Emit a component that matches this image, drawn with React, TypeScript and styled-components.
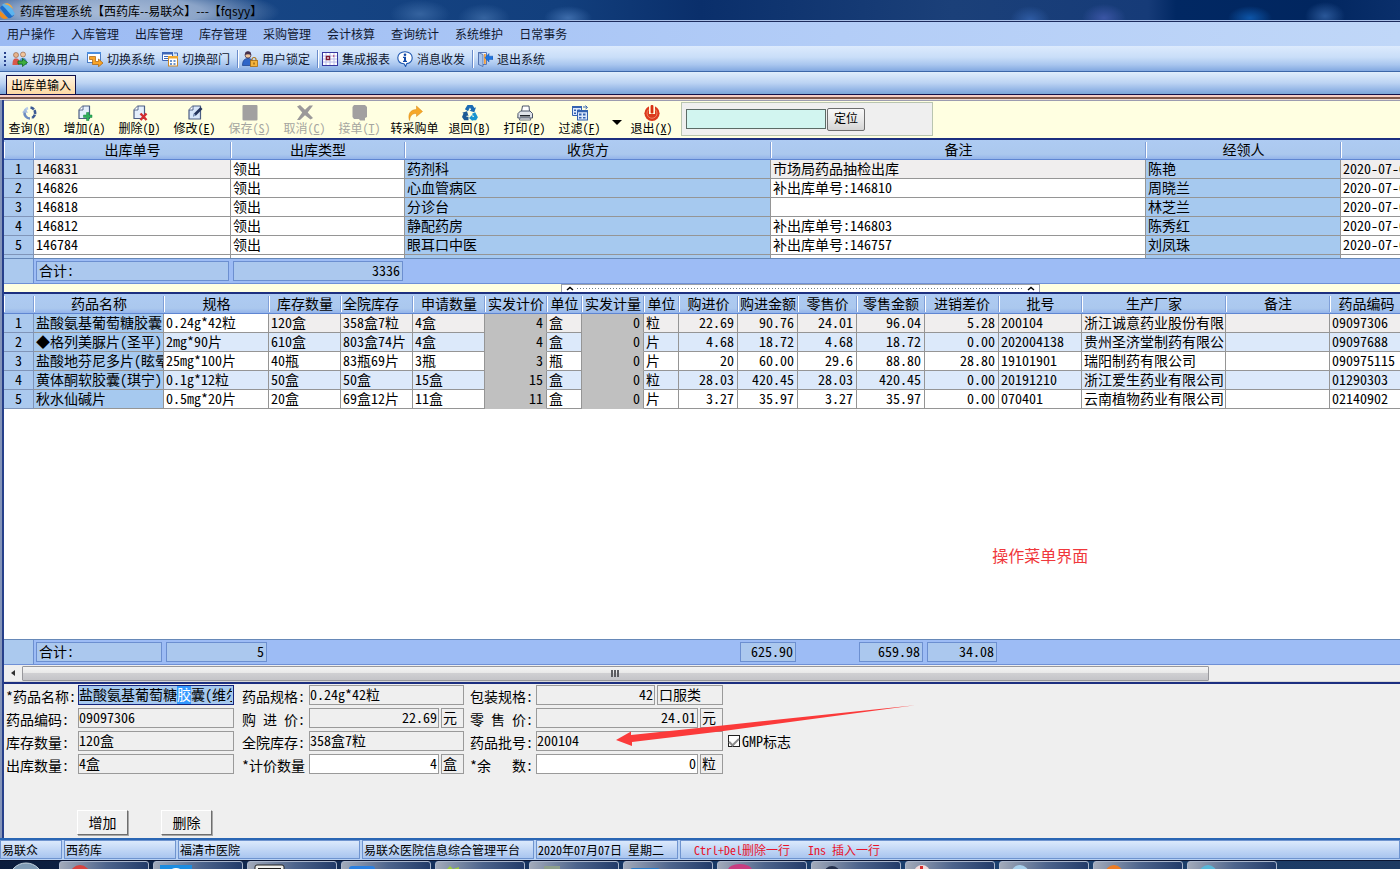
import React, { useEffect, useRef } from "react";
import styled, { createGlobalStyle, css } from "styled-components";

const GlobalStyle = createGlobalStyle`
  * { box-sizing: border-box; }
  body {
    margin: 0;
    background: #efefef;
    color: #000;
    font-family: "Noto Sans CJK SC", sans-serif;
    font-size: 14px;
  }
  button, input { font-family: inherit; }
`;

const halfWidth = css`
  font-feature-settings: "hwid" 1;
`;

const Window = styled.div`
  display: flex;
  flex-direction: column;
  min-height: 100vh;
  overflow: hidden;
`;

/* ---------- title, menu, system toolbar ---------- */

const TitleBar = styled.header`
  display: flex;
  align-items: center;
  gap: 4px;
  height: 22px;
  font-size: 12px;
  line-height: 18px;
  border-bottom: 1px solid #1c2b5c;
  box-shadow: inset 0 -1px 0 #a9bfe6;
  background:
    radial-gradient(ellipse 170px 28px at 110px 12px, #a9bcd8 0%, #8ba4c8 55%, rgba(90, 125, 175, 0) 100%),
    radial-gradient(ellipse 30px 14px at 420px 14px, #35639f, rgba(60, 100, 160, 0)),
    radial-gradient(ellipse 26px 14px at 484px 18px, #35639f, rgba(60, 100, 160, 0)),
    radial-gradient(ellipse 24px 12px at 568px 18px, #3d6cab, rgba(60, 100, 160, 0)),
    radial-gradient(ellipse 20px 14px at 1030px 20px, #2f5ca4, rgba(60, 100, 160, 0)),
    radial-gradient(ellipse 22px 14px at 1104px 18px, #3a55a4, rgba(60, 80, 160, 0)),
    radial-gradient(ellipse 22px 12px at 1250px 18px, #0d55a8, rgba(20, 80, 160, 0)),
    radial-gradient(ellipse 20px 14px at 1325px 16px, #2a5798, rgba(60, 100, 160, 0)),
    linear-gradient(90deg, #1a4a8a 0%, #123f7d 40%, #0a2f6b 50%, #1b4079 68%, #163b78 82%, #012863 84%, #01265f 94%, #0a2f6b 100%);
`;

const MenuBar = styled.nav`
  display: flex;
  align-items: center;
  gap: 16px;
  height: 24px;
  padding-left: 7px;
  background: linear-gradient(90deg, #9bbaf3, #b3cdf7 60%, #c0d7f8);
`;

const MenuItem = styled.button`
  border: 0;
  padding: 0;
  background: none;
  font-size: 12px;
  line-height: 18px;
  color: #101830;
  white-space: nowrap;
`;

const SystemBar = styled.div`
  display: flex;
  align-items: center;
  height: 26px;
  padding-left: 4px;
  border-bottom: 1px solid #3c67a8;
  background: linear-gradient(#dceafd, #c9def8 45%, #a9c6ef 75%, #82a8e0);
`;

const Grip = styled.span`
  width: 2px;
  height: 14px;
  margin-right: 6px;
  background: repeating-linear-gradient(#27408b 0 2px, transparent 2px 4px);
`;

const SystemButton = styled.button`
  display: flex;
  align-items: center;
  gap: 4px;
  margin-right: 7px;
  border: 0;
  padding: 0;
  background: none;
  font-size: 12px;
  line-height: 18px;
  color: #101830;
  white-space: nowrap;
`;

const BarSeparator = styled.span`
  width: 1px;
  height: 18px;
  margin-right: 4px;
  background: #6a8ccb;
  box-shadow: 1px 0 0 #fff;
`;

/* ---------- tab strip and command bar ---------- */

const TabStrip = styled.div`
  display: flex;
  align-items: flex-end;
  height: 23px;
  padding-left: 6px;
  border-bottom: 1px solid #10104a;
  background: linear-gradient(#e0eefc, #bcd3f3 50%, #8fb2e4 85%, #7ba7d6);
`;

const Tab = styled.button`
  height: 19px;
  border: 1px solid #10104a;
  border-bottom: 0;
  padding: 0 4px;
  background: linear-gradient(#fff3df, #fdd9a4);
  font-size: 12px;
  line-height: 18px;
  color: #000;
`;

const TabRule = styled.div`
  height: 5px;
  background: linear-gradient(#f6cfc6 0 2px, #80584c 2px 4px, #e8dcd8 4px 5px);
`;

const Workspace = styled.main`
  display: flex;
  flex: 1;
  flex-direction: column;
  border-left: 2px solid #8494b8;
  box-shadow: inset 2px 0 0 #27408b;
  padding-left: 2px;
`;

const CommandBar = styled.div`
  display: flex;
  height: 38px;
  border-top: 1px solid #9c9cb0;
  background: #ffffe1;
`;

const CommandButton = styled.button`
  display: flex;
  flex: none;
  flex-direction: column;
  align-items: center;
  width: 55px;
  border: 0;
  padding: 4px 0 0;
  background: none;
  font-size: 12px;
  line-height: 14px;
  white-space: nowrap;
  color: #000;
  ${halfWidth}

  &:first-child { margin-left: -2px; }
  &:disabled { color: #a5a5a0; }
`;

const DropButton = styled.button`
  flex: none;
  width: 17px;
  border: 0;
  padding: 0 0 0 3px;
  background: none;
`;

const SearchPanel = styled.form`
  display: flex;
  align-items: center;
  gap: 1px;
  width: 252px;
  height: 34px;
  margin: 1px 0 0 2px;
  border: 1px solid #b9c5b0;
  padding-left: 4px;
  background: #efefef;
`;

const SearchInput = styled.input`
  width: 140px;
  height: 20px;
  border: 1px solid #5c6b66;
  padding: 0 2px;
  background: #d2f5f0;
`;

const SearchButton = styled.button`
  width: 38px;
  height: 23px;
  border: 1px solid #6e6e6e;
  border-radius: 2px;
  padding: 0 0 2px;
  background: linear-gradient(#f8f8f8, #e9e9e9 50%, #d4d4d4);
  font-size: 12px;
  line-height: 18px;
`;

/* ---------- data grids ---------- */

const GridFrame = styled.section<{ $grow?: boolean }>`
  position: relative;
  display: flex;
  flex-direction: column;
  flex: ${(p) => (p.$grow ? "1" : "none")};
  border-top: 2px solid #1c2f80;
  background: #fff;
  overflow: hidden;
`;

const GridViewport = styled.div<{ $clip?: boolean }>`
  overflow: hidden;
  ${(p) => p.$clip && "height: 118px;"}
`;

const Table = styled.table<{ $min: number }>`
  width: 100%;
  min-width: ${(p) => p.$min}px;
  table-layout: fixed;
  border-collapse: separate;
  border-spacing: 0;
  line-height: 16px;
  ${halfWidth}
`;

const HeadCell = styled.th<{ $left?: boolean }>`
  height: 20px;
  padding: 0 0 0 ${(p) => (p.$left ? "2px" : "0")};
  vertical-align: top;
  line-height: 18px;
  border-bottom: 1px solid #5f86d2;
  text-align: ${(p) => (p.$left ? "left" : "center")};
  font-weight: normal;
  white-space: nowrap;
  background:
    linear-gradient(#fff, #fff) left 2px / 1px 16px no-repeat,
    linear-gradient(#7f9fd8, #7f9fd8) right 2px / 1px 16px no-repeat,
    linear-gradient(#aecbf2, #abc8ee 75%, #94b4ea);
`;

type Tone = "plain" | "soft" | "band" | "blue" | "grey";

const toneColor: Record<Tone, string> = {
  plain: "#ffffff",
  soft: "#f0eeee",
  band: "#dce9fa",
  blue: "#a6c9ef",
  grey: "#c0c0c0",
};

const Cell = styled.td<{ $tone: Tone; $right?: boolean; $clip?: boolean }>`
  height: 19px;
  padding: 0 ${(p) => (p.$clip ? "0" : "3px")} 0 2px;
  vertical-align: top;
  border-right: 1px solid #959595;
  border-bottom: 1px solid ${(p) => (p.$tone === "grey" ? "#c0c0c0" : "#959595")};
  text-align: ${(p) => (p.$right ? "right" : "left")};
  white-space: nowrap;
  ${(p) => p.$clip && "overflow: hidden;"}
  background: ${(p) => toneColor[p.$tone]};
`;

const RowNumber = styled.th`
  height: 19px;
  padding: 0;
  vertical-align: top;
  border-right: 1px solid #7f94b8;
  border-bottom: 1px solid #7f94b8;
  font-weight: normal;
  text-align: center;
  background: #abc9ee;
`;

const SummaryRow = styled.div`
  display: flex;
  flex: none;
  height: 26px;
  border-top: 1px solid #6688b8;
  border-bottom: 1px solid #6f90d6;
  background: #9dbcf5;
  line-height: 18px;
  ${halfWidth}
`;

const SummaryCell = styled.div<{ $width: number; $kind?: "corner" | "box"; $right?: boolean }>`
  flex: none;
  width: ${(p) => p.$width}px;
  ${(p) => p.$kind === "corner" && "border-right: 1px solid #6c8fd0; background: #abc9ee;"}
  ${(p) => p.$kind === "box" && "padding: 2px;"}
  text-align: ${(p) => (p.$right ? "right" : "left")};

  > output {
    display: block;
    height: 20px;
    border: 1px solid #6c8fd0;
    padding: 0 2px;
    line-height: 16px;
    background: #abc8ee;
  }
`;

const Splitter = styled.div`
  display: flex;
  height: 8px;
  background: #ffffe1;
`;

const SplitterHandle = styled.div`
  display: flex;
  align-items: center;
  gap: 3px;
  width: 34.3%;
  margin-left: 557px;
  border: 1px solid #9aa0a8;
  border-bottom: 0;
  padding: 0 4px;
  background: #fff;

  > i {
    flex: 1;
    height: 1px;
    background: repeating-linear-gradient(90deg, #6f7f8a 0 1px, transparent 1px 3px);
  }
`;

const BlankArea = styled.div`
  position: relative;
  flex: 1;
  min-height: 160px;
`;

const Note = styled.p`
  position: absolute;
  left: 70.8%;
  top: 134px;
  margin: 0;
  font-size: 16px;
  line-height: 24px;
  color: #f0383c;
  white-space: nowrap;
`;

const ScrollTrack = styled.div`
  display: flex;
  flex: none;
  align-items: center;
  height: 17px;
  border-bottom: 1px solid #d8d8d8;
  background: #efefef;
`;

const ScrollArrow = styled.button`
  display: flex;
  align-items: center;
  justify-content: center;
  width: 18px;
  height: 16px;
  border: 0;
  padding: 0;
  background: none;
`;

const ScrollThumb = styled.div`
  display: flex;
  align-items: center;
  justify-content: center;
  width: 85%;
  height: 15px;
  border: 1px solid #98989c;
  border-radius: 1px;
  background: linear-gradient(#f4f4f4, #e8e8e8 45%, #cfcfd2 50%, #c4c4c8);

  > i {
    width: 8px;
    height: 7px;
    background: repeating-linear-gradient(90deg, #5c5c60 0 2px, transparent 2px 3px);
  }
`;

/* ---------- detail form ---------- */

const DetailForm = styled.form`
  position: relative;
  flex: none;
  border-top: 2px solid #1c2f80;
  padding: 1px 0 3px 2px;
  background: #efefef;
  ${halfWidth}
`;

const FieldGrid = styled.div`
  display: grid;
  grid-template-columns: 72px 156px 75px 155px 72px 187px auto;
  grid-auto-rows: 20px;
  row-gap: 3px;
  justify-content: start;
`;

const Label = styled.label<{ $indent?: number }>`
  padding: 2px 0 0 ${(p) => p.$indent ?? 0}px;
  line-height: 18px;
  white-space: pre;
`;

const FieldBox = styled.div`
  display: flex;
  gap: 2px;
`;

const TextField = styled.input<{ $right?: boolean; $open?: boolean; $active?: boolean }>`
  flex: 1;
  width: 0;
  min-width: 0;
  height: 20px;
  border: 1px solid ${(p) => (p.$active ? "#14247c" : "#9a9a9a")};
  outline: 0;
  padding: 0 1px 2px 0;
  background: ${(p) => (p.$active ? "#a6c9ef" : p.$open ? "#fff" : "#efefef")};
  color: #000;
  font-size: 14px;
  line-height: 18px;
  text-align: ${(p) => (p.$right ? "right" : "left")};
  ${halfWidth}

  &::selection { background: #3399ff; color: #fff; }
`;

const Unit = styled.output<{ $wide?: boolean }>`
  flex: none;
  width: ${(p) => (p.$wide ? "66px" : "23px")};
  height: 20px;
  border: 1px solid #9a9a9a;
  padding-left: 1px;
  line-height: 16px;
`;

const CheckLabel = styled.label`
  display: flex;
  align-items: center;
  gap: 2px;
  padding-left: 5px;
  line-height: 18px;
  white-space: nowrap;
`;

const CheckBox = styled.input`
  display: grid;
  place-items: center;
  appearance: none;
  width: 12px;
  height: 12px;
  margin: 0;
  border: 1px solid #202020;
  background: #fff;

  &:checked::after {
    content: "";
    width: 4px;
    height: 8px;
    margin-bottom: 2px;
    border: solid #8a8a8a;
    border-width: 0 2px 2px 0;
    transform: rotate(45deg);
  }
`;

const FormActions = styled.div`
  display: flex;
  gap: 33px;
  padding: 36px 0 0 71px;
`;

const ActionButton = styled.button`
  width: 51px;
  height: 25px;
  border: 1px solid;
  border-color: #fff #6e6e6e #6e6e6e #fff;
  box-shadow: 1px 1px 0 #a8a8a8;
  padding: 0 0 2px;
  background: #f0f0f0;
  font-size: 14px;
  line-height: 20px;
`;

const Arrow = styled.svg`
  position: absolute;
  left: 612px;
  top: 20px;
  pointer-events: none;
`;

/* ---------- status bar and task bar ---------- */

const StatusBar = styled.footer`
  display: flex;
  flex: none;
  gap: 2px;
  height: 22px;
  border-top: 2px solid #2a66b4;
  padding-bottom: 1px;
  background: #b9d2f4;
  font-size: 12px;
  line-height: 17px;
  ${halfWidth}
`;

const StatusPanel = styled.div<{ $width?: number; $alert?: boolean }>`
  flex: ${(p) => (p.$width ? `0 0 ${p.$width}px` : "1")};
  border: 1px solid #6f94cf;
  padding-left: ${(p) => (p.$alert ? "13px" : "1px")};
  color: ${(p) => (p.$alert ? "#e8142c" : "#000")};
  background: linear-gradient(#dbe9fc, #a9c5ef);
  white-space: pre;
`;

const TaskBar = styled.div`
  display: flex;
  flex: none;
  gap: 4px;
  height: 9px;
  padding-left: 59px;
  overflow: hidden;
  position: relative;
  border-top: 1px solid #0a1430;
  background: linear-gradient(90deg, #0b1c3c, #15305c 30%, #1b4170 70%, #1d3a62);
`;

const TaskButton = styled.button`
  display: flex;
  flex: none;
  align-items: flex-start;
  width: 90px;
  height: 40px;
  border: 1px solid #aab6cc;
  border-radius: 3px;
  padding: 2px 0 0 6px;
  background: linear-gradient(100deg, #a3abba, #4d648c 50%, #1c3564);
`;

const StartOrb = styled.svg`
  position: absolute;
  left: 8px;
  top: 1px;
`;

/* ---------- icons ---------- */

const Ico = ({ children }: { children: React.ReactNode }) => (
  <svg width="16" height="16" viewBox="0 0 16 16" aria-hidden="true">{children}</svg>
);

const icons = {
  users: (
    <Ico>
      <circle cx="4" cy="4" r="2.5" fill="#e8b48c" stroke="#8c5a3a" strokeWidth=".6" />
      <path d="M0.5 14c0-5 1-6.500 3.500-6.500S8 9 8 14z" fill="#d8574a" />
      <circle cx="11" cy="3.500" r="2.500" fill="#f0c49c" stroke="#8c5a3a" strokeWidth=".6" />
      <path d="M7 14c0-5.500 1-7 4-7s4 1.500 4 7z" fill="#5c9ad8" />
      <path d="M6 10h4.500V7.500L15.500 11.500 10.500 15.500V13H6z" fill="#3fae3f" stroke="#14641c" strokeWidth=".8" />
    </Ico>
  ),
  system: (
    <Ico>
      <rect x=".5" y="1.500" width="13" height="10" fill="#fff" stroke="#4b7cc4" />
      <path d="M0 1h14v2H0z" fill="#4b8ee0" />
      <path d="M2.500 5.500h6v5h3V8l4.500 4-4.500 3.800V13.500H5.500V8.500H2.500z" fill="#f8a428" stroke="#a8600c" strokeWidth=".7" />
    </Ico>
  ),
  dept: (
    <Ico>
      <path d="M.5 1.500h10v8H.500z" fill="#fff" stroke="#3c66b8" />
      <path d="M0 1h11v2.500H0zM2 5h4v1H2zM2 7h4v1H2z" fill="#3c66b8" />
      <path d="M12 2h3.500v3" fill="none" stroke="#3c66b8" />
      <rect x="6.500" y="5.500" width="9" height="9.500" fill="#fff" stroke="#c8882c" />
      <path d="M6 5h10v2.500H6z" fill="#f0a830" />
      <path d="M8 9h2v2H8zM11.500 9h2v2h-2zM8 12h2v2H8zM11.500 12h2v2h-2z" fill="#6c94cc" />
    </Ico>
  ),
  lock: (
    <Ico>
      <path d="M0.500 14.500c0-5 2-7 5.500-7s5.500 2 5.500 7z" fill="#2f66c8" stroke="#183c88" strokeWidth=".7" />
      <circle cx="6" cy="4" r="3" fill="#f0c8a0" stroke="#402c48" strokeWidth=".7" />
      <path d="M3 4c0-3 1-3.800 3-3.800S9.200 1 9 4C7 3 5 3 3 4z" fill="#44304c" />
      <path d="M10 10V8.500a2 2 0 0 1 4 0V10" fill="none" stroke="#b07818" strokeWidth="1.200" />
      <rect x="8.500" y="9.500" width="7" height="6" fill="#f4b43c" stroke="#a86c10" strokeWidth=".8" />
      <path d="M11.500 11.500h1v2h-1z" fill="#704408" />
    </Ico>
  ),
  report: (
    <Ico>
      <rect x=".5" y="1.500" width="15" height="13" fill="#fff" stroke="#3838a0" />
      <path d="M4 2v12M8 2v12M12 2v12M1 5h14M1 8h14M1 11h14" stroke="#b4b4e8" strokeWidth=".9" />
      <path d="M4.500 5.500h3v3h-3z" fill="#fff" stroke="#801830" strokeWidth="1.400" />
      <path d="M11 4l2 1-2 1z" fill="#c04870" />
    </Ico>
  ),
  info: (
    <Ico>
      <path d="M8 .7c4.200 0 7.200 2.600 7.200 6 0 3.200-2.400 5.400-5.400 5.900L8.600 15.500 7 12.700C3.300 12.400.8 10 .8 6.700.8 3.300 3.800.7 8 .7z" fill="#fff" stroke="#1f58b0" strokeWidth="1.100" />
      <circle cx="8" cy="3.700" r="1.300" fill="#124aa8" />
      <path d="M6 5.700h3v4h1v1.300H6V9.700h1V7H6z" fill="#124aa8" />
    </Ico>
  ),
  exitDoor: (
    <Ico>
      <path d="M1.500 1.500h8v12h-8z" fill="#e8f0fc" stroke="#5878b8" />
      <path d="M1.500 1.500L6 3.500v12l-4.500-2z" fill="#a8c4ec" stroke="#4868a8" strokeWidth=".8" />
      <path d="M7 3h1.800v10H7z" fill="#f0a040" />
      <path d="M16 5.200h-4V2.500L8 6.700 12 11V8.400h4z" fill="#1c74e0" stroke="#1450a8" strokeWidth=".5" />
    </Ico>
  ),
  refresh: (
    <Ico>
      <path d="M8.500 2.500a5.500 5.500 0 0 1 1 10.600" fill="none" stroke="#3c5a94" strokeWidth="2.600" strokeDasharray="4 .7" />
      <path d="M8 13.500A5.500 5.500 0 0 1 2.600 7" fill="none" stroke="#6c8cc0" strokeWidth="2.600" />
      <path d="M3 5.500A5.500 5.500 0 0 1 6 3" fill="none" stroke="#b8cce8" strokeWidth="2.600" />
      <path d="M0 7.500L3.300 3.500 6 7.800z" fill="#a4bce0" />
    </Ico>
  ),
  add: (
    <Ico>
      <path d="M2 13.500V5l4-4h6.500v12.500z" fill="#e4effc" stroke="#4c5e84" strokeWidth="1.200" strokeLinejoin="round" />
      <path d="M6 1v4H2" fill="#fff" stroke="#4c5e84" strokeWidth=".9" />
      <path d="M9.500 7.500h2.500v2.500h3v2.500h-3v3H9.500v-3h-3V10h3z" fill="#2fae5c" stroke="#168440" strokeWidth=".5" />
    </Ico>
  ),
  remove: (
    <Ico>
      <path d="M2 13.500V5l4-4h6.500v12.500z" fill="#e4effc" stroke="#4c5e84" strokeWidth="1.200" strokeLinejoin="round" />
      <path d="M6 1v4H2" fill="#fff" stroke="#4c5e84" strokeWidth=".9" />
      <path d="M8.500 8.500l6 6.500M14.500 8.500l-6 6.500" stroke="#d42c30" strokeWidth="2.400" />
    </Ico>
  ),
  edit: (
    <Ico>
      <path d="M2 14V5l4-4h7.500v13z" fill="#d8e6fa" stroke="#4c5e84" strokeWidth="1.200" strokeLinejoin="round" />
      <path d="M6 1v4H2" fill="#fff" stroke="#4c5e84" strokeWidth=".9" />
      <path d="M6 11.500l1-3L13.500 2 15.500 4 9 10.500z" fill="#24345c" />
      <path d="M6 11.500l1-3 2 2z" fill="#8ca4cc" />
    </Ico>
  ),
  save: (
    <Ico>
      <rect x=".5" y="0" width="15" height="15.500" rx="1" fill="#a2a0a0" />
    </Ico>
  ),
  cancel: (
    <Ico>
      <path d="M0 1.500L3 0l5 4.700L12.500 .5H16L10.700 7.500 16 13l-2.500 1.500L8 10.300 3 15H0l5.200-7.500z" fill="#9c9a9a" />
    </Ico>
  ),
  receive: (
    <Ico>
      <path d="M2 0h11l2 2v10l-2 1v2.500H8L7 14H2L.500 12V2z" fill="#a2a0a0" />
    </Ico>
  ),
  forward: (
    <Ico>
      <path d="M2.500 15.500C.5 9 3.500 4.500 9.500 4.500V1L15.500 6.500 9.500 11.500V8.500C5.500 8.200 3 10.500 2.500 15.500z" fill="#f6a828" stroke="#d88410" strokeWidth=".5" />
    </Ico>
  ),
  recycle: (
    <Ico>
      <path d="M5.500 0h5l2 3 1.500-.7-1.700 5-4.800-1.500 1.600-1L8 2.500 6 6.200 2.900 4.300z" fill="#1c6cb4" />
      <path d="M13.200 7.300l2.700 5-1.800 3H10.500V16L7 13 10.500 9.500V12h1.700L10 8.700z" fill="#1894d0" />
      <path d="M6.500 15.300H2.200L0 12l1.500-3.500L.200 7.800 5 6.300l1.500 4.700-1.500-.6-.800 1.400h2.300z" fill="#1c5a94" />
    </Ico>
  ),
  print: (
    <Ico>
      <path d="M4.500 6.500L5.500 1h6.500l.500 5.500z" fill="#fff" stroke="#4a5468" />
      <path d="M1 8.500l2.500-2.500h9.500L15.500 8.500v4.500H.800z" fill="#dfe3ea" stroke="#4a5468" />
      <path d="M3 10h10v1.500H3z" fill="#20242c" />
      <path d="M3 13h10l.8 2H2.300z" fill="#f8f8f8" stroke="#4a5468" strokeWidth=".8" />
    </Ico>
  ),
  filter: (
    <Ico>
      <path d="M.5 1.500h9v9h-9z" fill="#dce8fc" stroke="#3462b0" />
      <path d="M0 1h10v2H0zM2 4.500h2v1.500H2zM5.500 4.500h2.500v1.500H5.500zM2 7.500h2v1.500H2z" fill="#3462b0" />
      <path d="M11 2h4M13.500 .5L15.500 2.500l-2 1.500" fill="none" stroke="#3462b0" />
      <rect x="5.500" y="5.500" width="10" height="9.500" fill="#dce8fc" stroke="#3462b0" />
      <path d="M5 5h11v2.300H5zM7 8.500h2.500v2H7zM11 8.500h2.500v2H11zM7 12h2.500v1.500H7zM11 12h2.500v1.500H11z" fill="#3462b0" />
    </Ico>
  ),
  power: (
    <Ico>
      <circle cx="8" cy="8.300" r="7.600" fill="#dc3a1c" />
      <path d="M4.600 4.600a5 5 0 1 0 6.800 0" fill="none" stroke="#ee8468" strokeWidth="1" />
      <path d="M5 0h6v9H5z" fill="#ffffe1" />
      <rect x="6.600" y="0" width="2.800" height="8.500" rx="1" fill="#d83010" />
    </Ico>
  ),
};

/* ---------- data ---------- */

const menus = ["用户操作", "入库管理", "出库管理", "库存管理", "采购管理", "会计核算", "查询统计", "系统维护", "日常事务"];

type SystemItem = { text: string; icon: React.ReactNode; split?: boolean };
const systemItems: SystemItem[] = [
  { text: "切换用户", icon: icons.users },
  { text: "切换系统", icon: icons.system },
  { text: "切换部门", icon: icons.dept },
  { text: "用户锁定", icon: icons.lock, split: true },
  { text: "集成报表", icon: icons.report, split: true },
  { text: "消息收发", icon: icons.info },
  { text: "退出系统", icon: icons.exitDoor, split: true },
];

type CommandItem = { text: string; letter?: string; icon: React.ReactNode; off?: boolean };
const commands: CommandItem[] = [
  { text: "查询", letter: "R", icon: icons.refresh },
  { text: "增加", letter: "A", icon: icons.add },
  { text: "删除", letter: "D", icon: icons.remove },
  { text: "修改", letter: "E", icon: icons.edit },
  { text: "保存", letter: "S", icon: icons.save, off: true },
  { text: "取消", letter: "C", icon: icons.cancel, off: true },
  { text: "接单", letter: "T", icon: icons.receive, off: true },
  { text: "转采购单", icon: icons.forward },
  { text: "退回", letter: "B", icon: icons.recycle },
  { text: "打印", letter: "P", icon: icons.print },
  { text: "过滤", letter: "F", icon: icons.filter },
];

const Command = ({ item }: { item: CommandItem }) => (
  <CommandButton type="button" disabled={item.off}>
    {item.icon}
    <span>{item.text}{item.letter && <>(<u>{item.letter}</u>)</>}</span>
  </CommandButton>
);

const orderCols = [197, 174, 366, 375, 195];
const orderHeads = ["出库单号", "出库类型", "收货方", "备注", "经领人", ""];
const orders = [
  ["146831", "领出", "药剂科", "市场局药品抽检出库", "陈艳", "2020-07-07"],
  ["146826", "领出", "心血管病区", "补出库单号:146810", "周晓兰", "2020-07-07"],
  ["146818", "领出", "分诊台", "", "林芝兰", "2020-07-07"],
  ["146812", "领出", "静配药房", "补出库单号:146803", "陈秀红", "2020-07-07"],
  ["146784", "领出", "眼耳口中医", "补出库单号:146757", "刘凤珠", "2020-07-07"],
];

const orderTone = (row: number, col: number): Tone => {
  if (col === 2 || col === 4) return "blue";
  return row === 0 && col !== 1 ? "soft" : "plain";
};

const drugCols = [130, 105, 72, 72, 72, 62, 35, 62, 35, 59, 60, 59, 68, 74, 83, 144, 104];
const drugHeads = ["药品名称", "规格", "库存数量", "全院库存", "申请数量", "实发计价", "单位", "实发计量", "单位", "购进价", "购进金额", "零售价", "零售金额", "进销差价", "批号", "生产厂家", "备注", "药品编码"];
const drugs = [
  ["盐酸氨基葡萄糖胶囊", "0.24g*42粒", "120盒", "358盒7粒", "4盒", "4", "盒", "0", "粒", "22.69", "90.76", "24.01", "96.04", "5.28", "200104", "浙江诚意药业股份有限", "", "09097306"],
  ["◆格列美脲片(圣平)", "2mg*90片", "610盒", "803盒74片", "4盒", "4", "盒", "0", "片", "4.68", "18.72", "4.68", "18.72", "0.00", "202004138", "贵州圣济堂制药有限公", "", "09097688"],
  ["盐酸地芬尼多片(眩晕", "25mg*100片", "40瓶", "83瓶69片", "3瓶", "3", "瓶", "0", "片", "20", "60.00", "29.6", "88.80", "28.80", "19101901", "瑞阳制药有限公司", "", "090975115"],
  ["黄体酮软胶囊(琪宁)", "0.1g*12粒", "50盒", "50盒", "15盒", "15", "盒", "0", "粒", "28.03", "420.45", "28.03", "420.45", "0.00", "20191210", "浙江爱生药业有限公司", "", "01290303"],
  ["秋水仙碱片", "0.5mg*20片", "20盒", "69盒12片", "11盒", "11", "盒", "0", "片", "3.27", "35.97", "3.27", "35.97", "0.00", "070401", "云南植物药业有限公司", "", "02140902"],
];
const numericCols = [5, 7, 9, 10, 11, 12, 13];

const drugTone = (row: number, col: number): Tone => {
  if (col === 0) return "blue";
  if (col === 5 || col === 7) return "grey";
  if (row % 2 === 1) return "band";
  return row === 0 && col !== 1 ? "soft" : "plain";
};

const drugTotals: Record<number, string> = { 1: "5", 10: "625.90", 12: "659.98", 13: "34.08" };

const taskIcons = [
  <circle cx="14" cy="11" r="10" fill="#d84440" />,
  <><rect x="0" y="1" width="32" height="20" fill="#1c8ce0" /><circle cx="16" cy="13" r="9" fill="#fff" /></>,
  <><rect x="1" y="1" width="29" height="20" rx="2" fill="#f0f0ec" stroke="#222" /><rect x="4" y="4" width="23" height="14" fill="#1c1c1c" /></>,
  <rect x="1" y="2" width="26" height="19" rx="3" fill="#2a7fe0" />,
  <path d="M2 8l6-6 3 3 6-2v12H2z" fill="#9ccc3c" />,
  <rect x="8" y="2" width="16" height="18" fill="#8ea08c" />,
  <rect x="0" y="4" width="30" height="16" rx="3" fill="#2a7cc8" />,
  <ellipse cx="16" cy="6" rx="12" ry="6" fill="#c83c80" />,
  <circle cx="14" cy="10" r="8" fill="#24304c" />,
  <><circle cx="10" cy="9" r="8" fill="#f4dcdc" /><path d="M8 2h3v6H8z" fill="#d82c2c" /></>,
  <circle cx="14" cy="10" r="9" fill="#a8d0ec" />,
  <circle cx="14" cy="10" r="9" fill="#ee7c24" />,
  <circle cx="14" cy="10" r="9" fill="#58b8d8" />,
];

const Caret = () => (
  <svg width="8" height="5" viewBox="0 0 8 5" aria-hidden="true">
    <path d="M1 4l3-2.500L7 4" fill="none" stroke="#000" strokeWidth="1.500" />
  </svg>
);

const ColumnSet = ({ widths }: { widths: number[] }) => (
  <colgroup>
    <col style={{ width: 30 }} />
    {widths.map((w, i) => <col key={i} style={{ width: w }} />)}
    <col />
  </colgroup>
);

export default function App() {
  const nameField = useRef<HTMLInputElement>(null);

  useEffect(() => {
    const field = nameField.current;
    if (!field) return;
    field.setSelectionRange(7, 8);
    field.focus({ preventScroll: true });
    field.scrollLeft = 0;
    const frame = requestAnimationFrame(() => { field.scrollLeft = 0; });
    return () => cancelAnimationFrame(frame);
  }, []);

  return (
    <Window>
      <GlobalStyle />
      <TitleBar>
        <svg width="16" height="18" viewBox="0 0 16 18" aria-hidden="true">
          <path d="M0 6c1-3 5-4 8-1l6 8c-3 4-6 4-8 1z" fill="#1c6cc8" />
          <path d="M2 3c3-3 7-1 9 2l4 7-3 2L5 6z" fill="#5cb4ee" />
          <path d="M0 9l8 7c-3 2-6 1-8-2z" fill="#f08c1c" />
          <path d="M4 2c4-2 8 1 9 5L8 3z" fill="#f6a83c" />
        </svg>
        <span>药库管理系统【西药库--易联众】---【fqsyy】</span>
      </TitleBar>

      <MenuBar>
        {menus.map((m) => <MenuItem key={m} type="button">{m}</MenuItem>)}
      </MenuBar>

      <SystemBar>
        <Grip />
        {systemItems.map((s) => (
          <React.Fragment key={s.text}>
            {s.split && <BarSeparator />}
            <SystemButton type="button">{s.icon}{s.text}</SystemButton>
          </React.Fragment>
        ))}
      </SystemBar>

      <TabStrip>
        <Tab type="button">出库单输入</Tab>
      </TabStrip>
      <TabRule />

      <Workspace>
        <CommandBar>
          {commands.map((c) => <Command key={c.text} item={c} />)}
          <DropButton type="button" aria-label="更多">
            <svg width="10" height="5" viewBox="0 0 10 5"><path d="M0 0h10L5 5z" fill="#000" /></svg>
          </DropButton>
          <Command item={{ text: "退出", letter: "X", icon: icons.power }} />
          <SearchPanel>
            <SearchInput aria-label="定位" />
            <SearchButton type="button">定位</SearchButton>
          </SearchPanel>
        </CommandBar>

        <GridFrame>
          <GridViewport $clip>
            <Table $min={1500}>
              <ColumnSet widths={orderCols} />
              <thead>
                <tr>
                  <HeadCell />
                  {orderHeads.map((h, i) => <HeadCell key={i}>{h}</HeadCell>)}
                </tr>
              </thead>
              <tbody>
                {orders.map((row, r) => (
                  <tr key={r}>
                    <RowNumber scope="row">{r + 1}</RowNumber>
                    {row.map((v, c) => <Cell key={c} $tone={orderTone(r, c)}>{v}</Cell>)}
                  </tr>
                ))}
                <tr>
                  <RowNumber scope="row" />
                  {orderHeads.map((_, c) => <Cell key={c} $tone={orderTone(5, c)} />)}
                </tr>
              </tbody>
            </Table>
          </GridViewport>
          <SummaryRow>
            <SummaryCell $width={30} $kind="corner" />
            <SummaryCell $width={197} $kind="box"><output>合计:</output></SummaryCell>
            <SummaryCell $width={174} $kind="box" $right><output>3336</output></SummaryCell>
          </SummaryRow>
        </GridFrame>

        <Splitter>
          <SplitterHandle><Caret /><i /><Caret /></SplitterHandle>
        </Splitter>

        <GridFrame $grow>
          <GridViewport>
            <Table $min={1399}>
              <ColumnSet widths={drugCols} />
              <thead>
                <tr>
                  <HeadCell />
                  {drugHeads.map((h, i) => <HeadCell key={i} $left={i === 3}>{h}</HeadCell>)}
                </tr>
              </thead>
              <tbody>
                {drugs.map((row, r) => (
                  <tr key={r}>
                    <RowNumber scope="row">{r + 1}</RowNumber>
                    {row.map((v, c) => (
                      <Cell key={c} $tone={drugTone(r, c)} $right={numericCols.includes(c)} $clip={c === 0}>{v}</Cell>
                    ))}
                  </tr>
                ))}
              </tbody>
            </Table>
          </GridViewport>
          <BlankArea>
            <Note>操作菜单界面</Note>
          </BlankArea>
          <SummaryRow>
            <SummaryCell $width={30} $kind="corner" />
            <SummaryCell $width={130} $kind="box"><output>合计:</output></SummaryCell>
            {drugCols.slice(1).map((w, i) => {
              const total = drugTotals[i + 1];
              return total ? (
                <SummaryCell key={i} $width={w} $kind="box" $right><output>{total}</output></SummaryCell>
              ) : (
                <SummaryCell key={i} $width={w} />
              );
            })}
          </SummaryRow>
          <ScrollTrack>
            <ScrollArrow type="button" aria-label="向左滚动">
              <svg width="4" height="6" viewBox="0 0 4 6"><path d="M4 0v6L0 3z" fill="#303030" /></svg>
            </ScrollArrow>
            <ScrollThumb><i /></ScrollThumb>
          </ScrollTrack>
        </GridFrame>

        <DetailForm>
          <FieldGrid>
            <Label htmlFor="name">*药品名称:</Label>
            <FieldBox>
              <TextField id="name" ref={nameField} $active readOnly defaultValue="盐酸氨基葡萄糖胶囊(维尔固)" />
            </FieldBox>
            <Label htmlFor="spec" $indent={8}>药品规格:</Label>
            <FieldBox><TextField id="spec" readOnly defaultValue="0.24g*42粒" /></FieldBox>
            <Label htmlFor="pack" $indent={6}>包装规格:</Label>
            <FieldBox>
              <TextField id="pack" $right readOnly defaultValue="42" />
              <Unit $wide>口服类</Unit>
            </FieldBox>
            <span />

            <Label htmlFor="code">药品编码:</Label>
            <FieldBox><TextField id="code" readOnly defaultValue="09097306" /></FieldBox>
            <Label htmlFor="buy" $indent={8}>购 进 价:</Label>
            <FieldBox>
              <TextField id="buy" $right readOnly defaultValue="22.69" />
              <Unit>元</Unit>
            </FieldBox>
            <Label htmlFor="sell" $indent={6}>零 售 价:</Label>
            <FieldBox>
              <TextField id="sell" $right readOnly defaultValue="24.01" />
              <Unit>元</Unit>
            </FieldBox>
            <span />

            <Label htmlFor="stock">库存数量:</Label>
            <FieldBox><TextField id="stock" readOnly defaultValue="120盒" /></FieldBox>
            <Label htmlFor="total" $indent={8}>全院库存:</Label>
            <FieldBox><TextField id="total" readOnly defaultValue="358盒7粒" /></FieldBox>
            <Label htmlFor="batch" $indent={6}>药品批号:</Label>
            <FieldBox><TextField id="batch" readOnly defaultValue="200104" /></FieldBox>
            <CheckLabel><CheckBox type="checkbox" defaultChecked />GMP标志</CheckLabel>

            <Label htmlFor="out">出库数量:</Label>
            <FieldBox><TextField id="out" readOnly defaultValue="4盒" /></FieldBox>
            <Label htmlFor="priced" $indent={8}>*计价数量</Label>
            <FieldBox>
              <TextField id="priced" $right $open defaultValue="4" />
              <Unit>盒</Unit>
            </FieldBox>
            <Label htmlFor="rest" $indent={6}>*余   数:</Label>
            <FieldBox>
              <TextField id="rest" $right $open defaultValue="0" />
              <Unit>粒</Unit>
            </FieldBox>
          </FieldGrid>
          <FormActions>
            <ActionButton type="button">增加</ActionButton>
            <ActionButton type="button">删除</ActionButton>
          </FormActions>
          <Arrow width="300" height="44" viewBox="0 0 300 44" aria-hidden="true">
            <path d="M0 36L15 27.500V31L104 21.700 299 1.200 104 27.500 16 38V42z" fill="#fb3a3a" />
          </Arrow>
        </DetailForm>
      </Workspace>

      <StatusBar>
        <StatusPanel $width={62}>易联众</StatusPanel>
        <StatusPanel $width={112}>西药库</StatusPanel>
        <StatusPanel $width={182}>福清市医院</StatusPanel>
        <StatusPanel $width={172}>易联众医院信息综合管理平台</StatusPanel>
        <StatusPanel $width={142}>2020年07月07日 星期二</StatusPanel>
        <StatusPanel $alert>Ctrl+Del删除一行   Ins 插入一行</StatusPanel>
      </StatusBar>

      <TaskBar>
        <StartOrb width="36" height="36" viewBox="0 0 36 36" aria-hidden="true">
          <circle cx="18" cy="18" r="17" fill="#7e9ab4" stroke="#c4d4e0" />
        </StartOrb>
        {taskIcons.map((icon, i) => (
          <TaskButton key={i} type="button" aria-label={`窗口 ${i + 1}`}>
            <svg width="32" height="22" viewBox="0 0 32 22">{icon}</svg>
          </TaskButton>
        ))}
      </TaskBar>
    </Window>
  );
}
